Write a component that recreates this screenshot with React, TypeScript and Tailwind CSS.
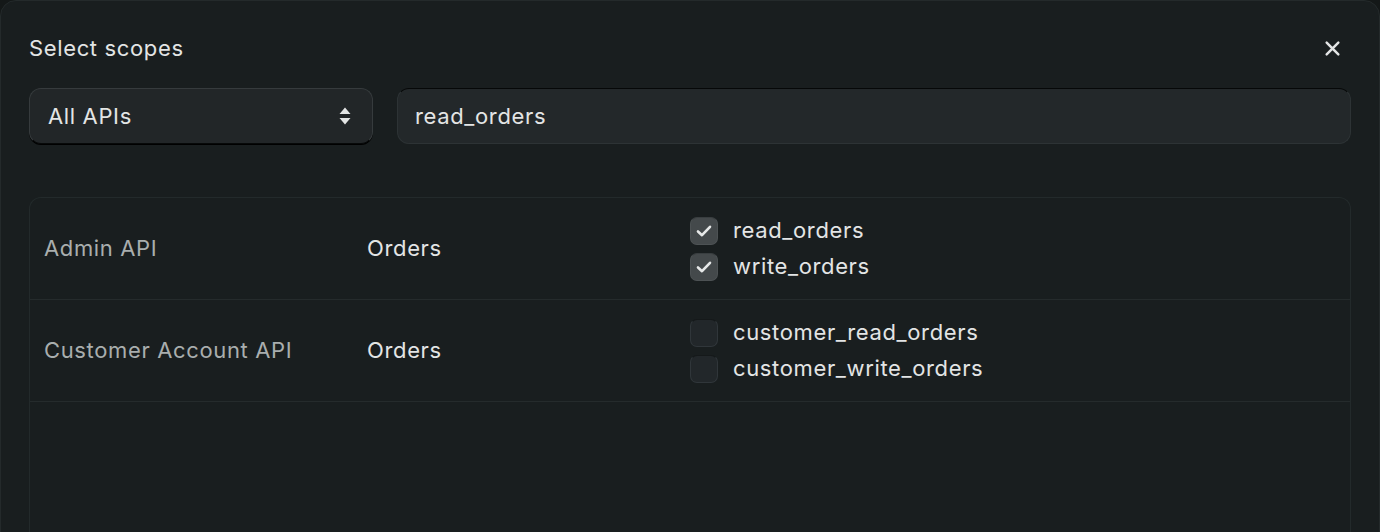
import * as React from 'react';

const rows = [
  {
    api: 'Admin API',
    resource: 'Orders',
    scopes: [
      { name: 'read_orders', checked: true },
      { name: 'write_orders', checked: true },
    ],
  },
  {
    api: 'Customer Account API',
    resource: 'Orders',
    scopes: [
      { name: 'customer_read_orders', checked: false },
      { name: 'customer_write_orders', checked: false },
    ],
  },
];

const Checkbox: React.FC<{ checked: boolean }> = ({ checked }) =>
  checked ? (
    <div className="w-7 h-7 rounded-[7px] bg-[#44494b] border border-[#4d5254] border-t-[#393e40] flex items-center justify-center">
      <svg width="20" height="20" viewBox="0 0 20 20" fill="none">
        <path d="M4 10.5l4 3.7L16 5.8" stroke="#e6e8e8" strokeWidth="2.6" strokeLinecap="round" strokeLinejoin="round" />
      </svg>
    </div>
  ) : (
    <div className="w-7 h-7 rounded-[7px] bg-[#22272a] border border-[#30363a] border-t-[#15191a]" />
  );

export default function App() {
  return (
    <div className="h-[532px] overflow-hidden bg-[#141818] font-['Inter','Liberation_Sans',sans-serif] tracking-[0.04em]">
      <div className="h-[600px] rounded-t-[16px] border border-[#242a2b] bg-[#191e1f] pt-[33px] px-[28px]">
        {/* Header */}
        <div className="flex items-center justify-between h-7">
          <h2 className="text-[22px] leading-7 text-[#e3e5e5]">Select scopes</h2>
          <button className="mr-[10px] text-[#e3e5e5]">
            <svg width="17" height="17" viewBox="0 0 16 16" fill="none">
              <path d="M2.5 2.5l11 11M13.5 2.5l-11 11" stroke="currentColor" strokeWidth="2.3" strokeLinecap="round" />
            </svg>
          </button>
        </div>

        {/* Filters */}
        <div className="flex gap-6 mt-[26px]">
          <div className="w-[344px] h-14 rounded-[12px] bg-[#222628] border border-[#363b3d] border-b-[#070909] shadow-[0_1px_0_#000] flex items-center justify-between pl-[18px] pr-[20px]">
            <span className="text-[22px] text-[#e3e5e5]">All APIs</span>
            <svg width="14" height="22" viewBox="0 0 14 22" fill="#e3e5e5">
              <path d="M7 2.5l5.5 6.5H1.5z" />
              <path d="M7 19.5L1.5 13h11z" />
            </svg>
          </div>
          <div className="flex-1 h-14 rounded-[12px] bg-[#23282a] border border-[#2d3335] border-t-[#060808] flex items-center px-[17px]">
            <span className="text-[22px] text-[#e3e5e5]">read_orders</span>
          </div>
        </div>

        {/* Table */}
        <div className="mt-[53px] h-[400px] rounded-t-[12px] border border-[#232a2b] border-b-0">
          {rows.map((row) => (
            <div key={row.api} className="flex items-center h-[102px] border-b border-[#252b2c] pl-[14px]">
              <div className="w-[323px] text-[22px] text-[#a9aeae]">{row.api}</div>
              <div className="w-[323px] text-[22px] text-[#e3e5e5]">{row.resource}</div>
              <div className="flex flex-col gap-2">
                {row.scopes.map((s) => (
                  <div key={s.name} className="flex items-center gap-[15px]">
                    <Checkbox checked={s.checked} />
                    <span className="text-[22px] leading-7 text-[#e3e5e5] -translate-y-px">{s.name}</span>
                  </div>
                ))}
              </div>
            </div>
          ))}
        </div>
      </div>
    </div>
  );
}
